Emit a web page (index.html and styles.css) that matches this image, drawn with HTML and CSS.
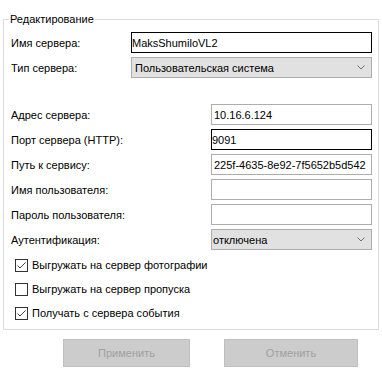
FILE: index.html
```html
<!DOCTYPE html>
<html lang="ru">
<head>
    <meta charset="UTF-8">
    <meta name="viewport" content="width=device-width, initial-scale=1.0">
    <title>Редактирование сервера</title>
    <link rel="stylesheet" href="styles.css">
</head>
<body>
    <form class="editor">
        <fieldset class="group">
            <legend>Редактирование</legend>

            <!-- General -->
            <div class="row">
                <label class="caption">Имя сервера:</label>
                <input class="field field-wide active" type="text" value="MaksShumiloVL2">
            </div>
            <div class="row">
                <label class="caption">Тип сервера:</label>
                <div class="combo combo-wide">
                    <span>Пользовательская система</span>
                    <svg class="arrow" width="8" height="5" viewBox="0 0 8 5"><polyline points="0.5,0.5 4,4 7.5,0.5" fill="none" stroke="#707070" stroke-width="1"/></svg>
                </div>
            </div>

            <!-- Connection -->
            <div class="row row-split">
                <label class="caption caption-long">Адрес сервера:</label>
                <input class="field" type="text" value="10.16.6.124">
            </div>
            <div class="row">
                <label class="caption caption-long">Порт сервера (HTTP):</label>
                <input class="field active" type="text" value="9091">
            </div>
            <div class="row">
                <label class="caption caption-long">Путь к сервису:</label>
                <input class="field" type="text" value="225f-4635-8e92-7f5652b5d542">
            </div>
            <div class="row">
                <label class="caption caption-long">Имя пользователя:</label>
                <input class="field" type="text" value="">
            </div>
            <div class="row">
                <label class="caption caption-long">Пароль пользователя:</label>
                <input class="field" type="password" value="">
            </div>
            <div class="row row-last">
                <label class="caption caption-long">Аутентификация:</label>
                <div class="combo">
                    <span>отключена</span>
                    <svg class="arrow" width="8" height="5" viewBox="0 0 8 5"><polyline points="0.5,0.5 4,4 7.5,0.5" fill="none" stroke="#707070" stroke-width="1"/></svg>
                </div>
            </div>

            <!-- Options -->
            <label class="check">
                <span class="box"><svg width="11" height="11" viewBox="0 0 11 11"><polyline points="1.5,5.5 4,8 9.5,2.5" fill="none" stroke="#444" stroke-width="1"/></svg></span>
                Выгружать на сервер фотографии
            </label>
            <label class="check">
                <span class="box"></span>
                Выгружать на сервер пропуска
            </label>
            <label class="check">
                <span class="box"><svg width="11" height="11" viewBox="0 0 11 11"><polyline points="1.5,5.5 4,8 9.5,2.5" fill="none" stroke="#444" stroke-width="1"/></svg></span>
                Получать с сервера события
            </label>
        </fieldset>

        <div class="actions">
            <button type="button" class="btn btn-apply" disabled>Применить</button>
            <button type="button" class="btn btn-cancel" disabled>Отменить</button>
        </div>
    </form>
</body>
</html>
```

FILE: styles.css
```css
*, *:before, *:after {
    box-sizing: border-box;
}
body {
    margin: 0;
    background-color: #fff;
    color: #000;
    font-family: "Liberation Sans", Arial, sans-serif;
    font-size: 11px;
}

.group {
    width: 376px;
    min-width: 0;
    margin: 13px 3px 0;
    padding: 6px 0 4px 7px;
    border: 1px solid #dcdcdc;
}
.group legend {
    margin-left: -2px;
    padding: 0 1px;
    line-height: 13px;
}

.row {
    display: flex;
    align-items: center;
    height: 21px;
    margin-bottom: 4px;
}
/* margins collapse with the row above */
.row-split {
    margin-top: 26px;
}
.row-last {
    margin-bottom: 3px;
}
.caption {
    width: 120px;
    flex-shrink: 0;
}
.caption-long {
    width: 200px;
}

.field {
    width: 161px;
    height: 21px;
    margin: 0;
    padding: 0 2px;
    border: 1px solid #adadad;
    background-color: #fff;
    color: #000;
    font: inherit;
    outline: none;
}
.field-wide {
    width: 241px;
}
.field.active {
    border-color: #000;
    padding: 0;
}

.combo {
    display: flex;
    align-items: center;
    justify-content: space-between;
    width: 161px;
    height: 21px;
    padding: 0 6px 0 1px;
    border: 1px solid #adadad;
    background-color: #e1e1e1;
}
.combo-wide {
    width: 241px;
    padding-left: 3px;
}
.arrow {
    display: block;
}

.check {
    display: flex;
    align-items: center;
    gap: 4px;
    height: 24px;
    margin-left: 4px;
}
.box {
    display: flex;
    align-items: center;
    justify-content: center;
    width: 13px;
    height: 13px;
    border: 1px solid #333;
    background-color: #fff;
}
.box svg {
    display: block;
}

.actions {
    display: flex;
    gap: 34px;
    margin-top: 9px;
    padding-left: 63px;
}
.btn {
    height: 28px;
    margin: 0;
    padding: 0;
    border: 1px solid #bfbfbf;
    background-color: #ccc;
    color: #a0a0a0;
    font: inherit;
}
.btn-apply {
    width: 127px;
}
.btn-cancel {
    width: 134px;
}
```
